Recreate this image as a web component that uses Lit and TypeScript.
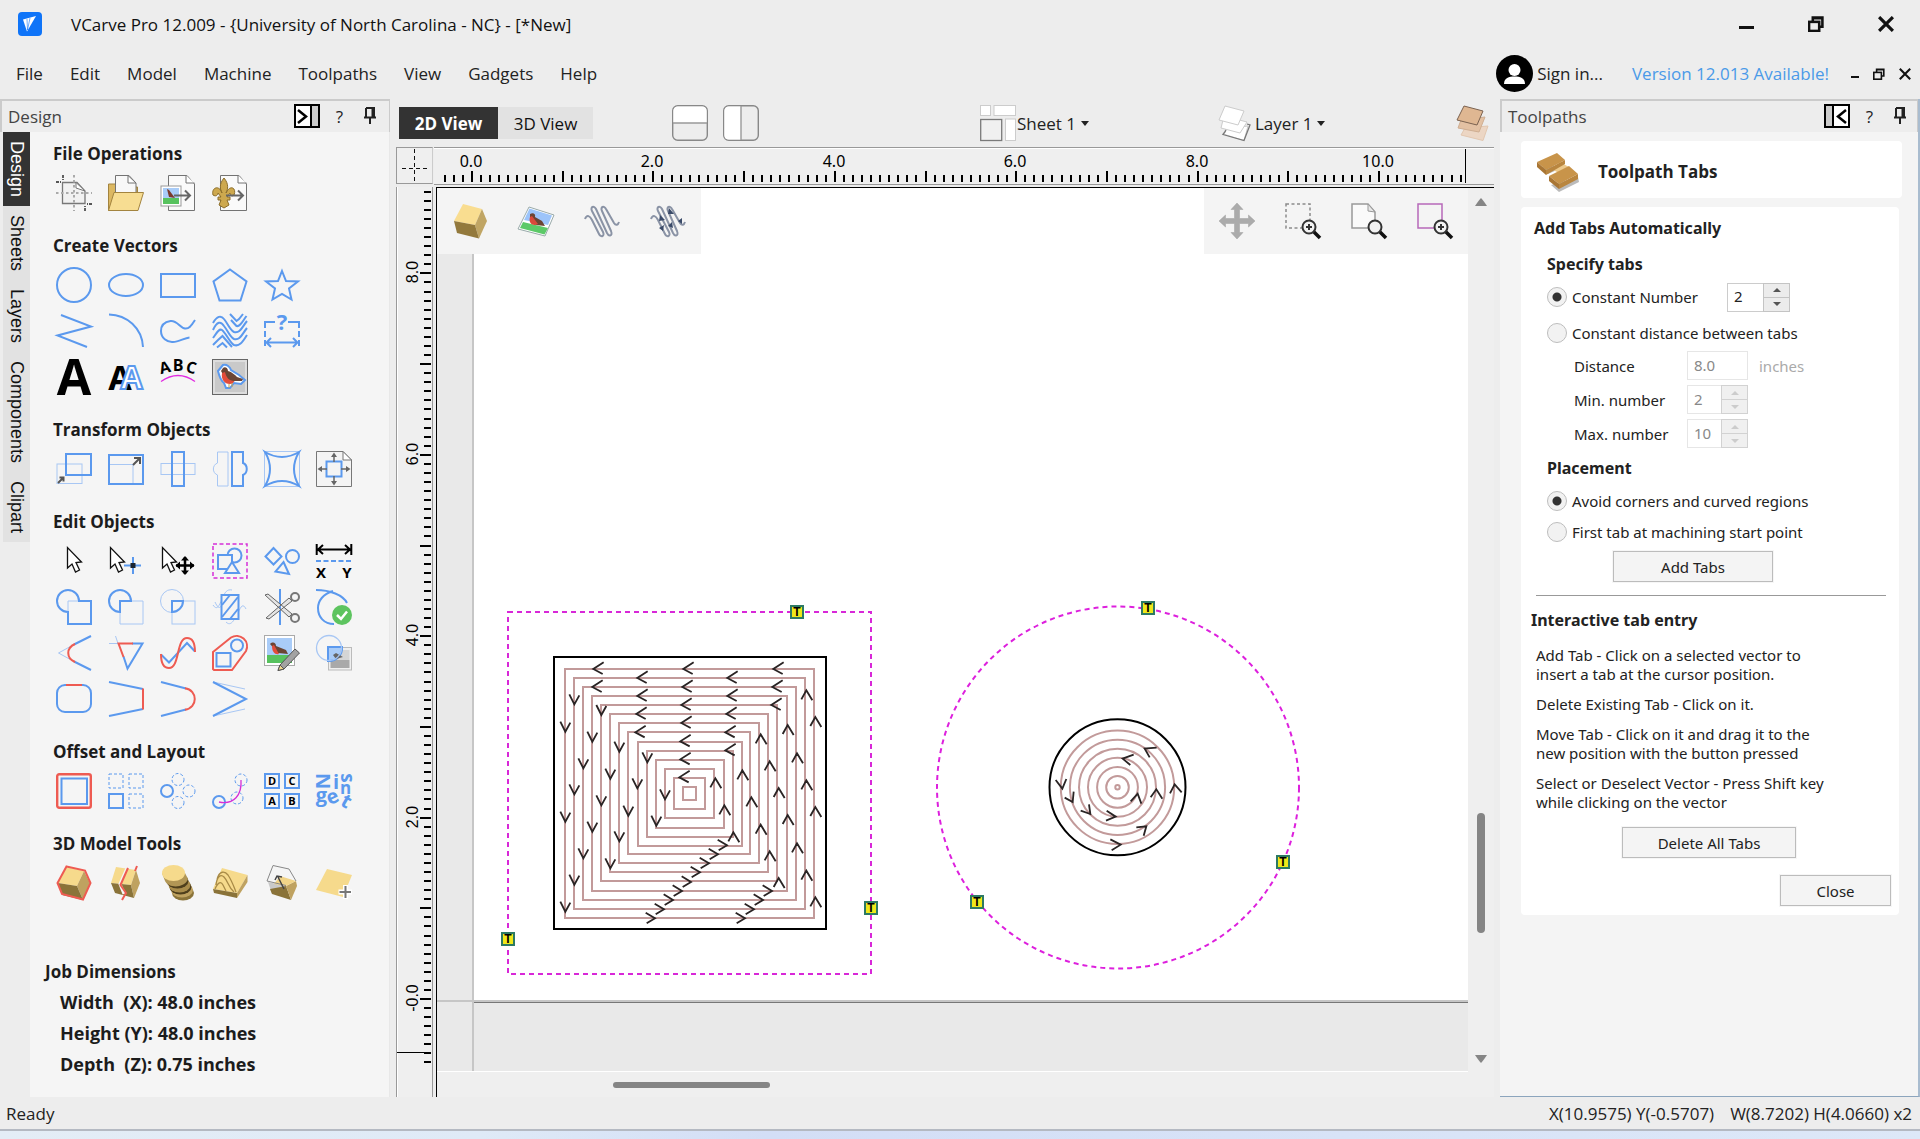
import { LitElement, html, svg, css, nothing, SVGTemplateResult } from "lit";
import { customElement, state } from "lit/decorators.js";
import { classMap } from "lit/directives/class-map.js";

const BLUE = "#5b99ee";
const PALE = "#a8c7f4";
const RED = "#ee5b52";
const PINK = "#d52fd8";
const GREY = "#737373";

type Art = SVGTemplateResult;

const line = (d: string, color = BLUE, w = 2): Art =>
  svg`<path d=${d} fill="none" stroke=${color} stroke-width=${w}></path>`;
const shape = (d: string, fill: string, stroke = "none", w = 1): Art =>
  svg`<path d=${d} fill=${fill} stroke=${stroke} stroke-width=${w}></path>`;
const ring = (cx: number, cy: number, r: number, color = BLUE, w = 2, dash = ""): Art =>
  svg`<circle cx=${cx} cy=${cy} r=${r} fill="none" stroke=${color} stroke-width=${w} stroke-dasharray=${dash}></circle>`;
const box = (x: number, y: number, w: number, h: number, color = BLUE, sw = 2, fill = "none", dash = ""): Art =>
  svg`<rect x=${x} y=${y} width=${w} height=${h} fill=${fill} stroke=${color} stroke-width=${sw} stroke-dasharray=${dash}></rect>`;
const glyph = (t: string, x: number, y: number, size: number, color = "#000", turn = 0, weight = 700): Art =>
  svg`<text x=${x} y=${y} font-family="Open Sans, sans-serif" font-weight=${weight} font-size=${size} fill=${color} text-anchor="middle" transform=${`rotate(${turn} ${x} ${y})`}>${t}</text>`;

const bird: Art = svg`
  <path d="M9 12 L11 9 C13 7 16 9 16 12 C20 13 23 16 25 18 L31 20 L30 22 L23 22 C20 24 15 23 13 19 Z" fill="#6b4534"></path>
  <path d="M10 14 C9 20 12 25 18 25 C20 25 22 24 22 22 C17 22 14 18 13 13 Z" fill="#e24c3a"></path>
  <path d="M17 25 V29 M20 24 V28" stroke="#c9a24a" stroke-width="1"></path>`;

const cursor = (x: number): Art =>
  shape(`M${x} 4.5 V25 L${x + 4.5} 21 L${x + 8} 29 L${x + 12} 27 L${x + 8.5} 19.5 L${x + 14} 19 Z`, "#fff", "#111", 1.3);

const cube: Art = svg`
  ${shape("M10 2 L28 6 L21 21 L2 18 Z", "#f6da8c")}
  ${shape("M28 6 L34 18 L27 35 L21 21 Z", "#bfa260")}
  ${shape("M2 18 L21 21 L27 35 L6 30 Z", "#8a7339")}`;

const squiggle: Art = line(
  "M1 16 C3 11 6 13 8 17 L15 31 C17 35 21 33 19 29 L8 8 C6 4 10 2 12 6 L23 30 C25 34 29 33 27 28 L18 8 C16 4 20 2 22 6 L30 20 C32 23 34 22 35 19",
  "#8a93a5", 2);

const lens = (plus: boolean): Art => svg`
  <path d="M28 28 L35 35" stroke="#111" stroke-width="3.5"></path>
  <circle cx="24" cy="24" r="6.5" fill="#f2f2f2" stroke="#333" stroke-width="2"></circle>
  ${plus ? svg`<path d="M21 24 H27 M24 21 V27" stroke="#333" stroke-width="2"></path>` : nothing}`;

const plies = (fill: string, edge: string, back: string, backEdge: string): Art => svg`
  ${shape("M8 24 L30 21 L26 35.5 L5 29 Z", back, backEdge)}
  ${shape("M6 11 L29 17 L22 28 L3 23 Z", back, backEdge)}
  ${shape("M7 1 L26 6 L20 20 L1 15 Z", fill, edge)}`;

const art: Record<string, Art> = {
  newFile: svg`
    ${shape("M6.5 7.5 H21 L29 16 V28.5 H6.5 Z", "#f1f1f1", "#777", 1.3)}
    ${shape("M20 7.5 V13 L29 16 Z", "#fff", "#777")}
    <path d="M18 0 V36 M0 18 H36" stroke="#aaa" stroke-width="2" stroke-dasharray="2.5 2.5"></path>
    <path d="M7 0 V5 M0 7 H5 M29 36 V31 M36 29 H31" stroke="#222" stroke-width="1.4" stroke-dasharray="3 1"></path>`,
  openFile: svg`
    ${shape("M.5 9 H8 L10 12 H29.500 V35.5 H.5 Z", "#dcb862", "#a3843f")}
    ${shape("M7.5 .5 H21 L28 8 V22 H7.5 Z", "#f8f8f8", GREY)}
    ${shape("M20 .5 V8 H28 Z", "#fff", GREY)}
    ${shape("M6 17.5 H35.5 L30 35.5 H.5 Z", "#f7dd92", "#a3843f")}`,
  importImage: svg`
    ${shape("M8.5 .5 H27 L34.5 9 V35.5 H8.5 Z", "#fafafa", GREY)}
    ${shape("M26 .5 V8 H34.5", "#fff", GREY)}
    <rect x="1" y="11" width="20" height="20" fill="#fff" stroke="#999"></rect>
    <rect x="3" y="13" width="16" height="10" fill="#a9ccf8"></rect>
    <rect x="3" y="23" width="16" height="6" fill="#57c25e"></rect>
    <path d="M7 14 L9 15 L15 23 L9 22 Z" fill="#7b3a2c"></path>
    <path d="M14 20.5 H30 M25 15.5 L30 20.5 L25 25.5" fill="none" stroke="#666" stroke-width="2"></path>`,
  importClip: svg`
    ${shape("M8.5 .5 H27 L34.5 9 V35.5 H8.5 Z", "#fafafa", GREY)}
    ${shape("M26 .5 V8 H34.5", "#fff", GREY)}
    ${shape("M12 3 C17 9 16 14 14 18 C18 9 25 13 22 20 C20 22 18 20 18 18 L15 22 H18 V25 H15 L17 30 L12 33 L7 30 L9 25 H6 V22 H9 L6 18 C6 20 4 22 1 20 C-1 13 7 9 10 18 C8 14 7 9 12 3 Z", "#cda84e", "#8b6d2a")}
    <path d="M14 20.5 H31 M26 15.5 L31 20.5 L26 25.5" fill="none" stroke="#666" stroke-width="2"></path>`,
  circle: ring(18, 18, 17),
  ellipse: svg`<ellipse cx="18" cy="18" rx="17" ry="11" fill="none" stroke=${BLUE} stroke-width="2"></ellipse>`,
  rect: box(1, 7, 34, 23),
  polygon: line("M18 2.5 L34.5 14.5 L28.5 33.5 H7.5 L1.5 14.5 Z"),
  star: line("M18 4 L22 14 L34 14.5 L25 21.5 L27.5 32.5 L18 27 L8.5 32.5 L11 21.5 L2 14.5 L14 14 Z"),
  polyline: line("M5 2 L35 13.5 L1.5 22.5 L31 34"),
  arc: line("M1 1.5 C19 2 34 15 35 34"),
  bezier: line("M35 7 C31 13 29 16 25 15.5 C20 15 17 7 10.5 8 C4 9 1 13 1 18 C1 25 7 29.5 13 29 C19 29 24 25 29.5 24.5"),
  texture: svg`
    ${line("M1 10 C5 3 9 2 12 6 C16 11 18 17 22 19 C28 21 30 14 35 8")}
    ${line("M1 17 C5 8 9 8 12 13 C16 18 18 24 22 26 C28 28 30 21 35 15")}
    ${line("M1 25 C4 21 7 15 10 17 C14 20 18 30 22 32 C28 34 31 28 35 22")}
    ${line("M18 1 L24.5 8 L27 6 L31 1 M19 7 L24.5 13 C28 14 30 9 34.5 3")}
    ${line("M1 32 L6 27 L10.5 23 L20 34 M5 34.5 L10.5 30 L15 34.5")}`,
  dimension: svg`
    ${line("M0 9 H11 M24 9 H36")}
    <path d="M1 9 V34 M35 9 V34" stroke=${BLUE} stroke-width="2" stroke-dasharray="6 3"></path>
    ${line("M2 29.5 H34 M7 25 L2.5 29.5 L7 34 M29 25 L33.5 29.5 L29 34")}
    ${glyph("?", 18, 17, 22, BLUE)}`,
  text: glyph("A", 18, 36, 50),
  textOutline: svg`
    ${glyph("A", 12, 30.5, 34)}
    <text x="23.500" y="30" font-family="Open Sans, sans-serif" font-weight="700" font-size="32" fill="#fff" stroke=${BLUE} stroke-width="2" text-anchor="middle">A</text>`,
  textCurve: svg`
    ${glyph("A", 6, 14, 16, "#000", -14)}${glyph("B", 18, 12, 16)}${glyph("C", 30, 14, 16, "#000", 14)}
    ${line("M1 22.500 Q18 10.500 35 22.500", "#e22be2", 1.3)}`,
  trace: svg`
    <rect x=".5" y=".5" width="35" height="35" fill="#ddd" stroke="#666"></rect>
    <rect x="3" y="3" width="30" height="30" fill="#c9c9c9"></rect>
    ${shape("M6 12 L11 6 C15 5 18 8 19 11 L27 16 L33 21 L29 25 L22 24 L18 29 H14 L12 24 C8 21 7 16 6 12 Z", "#fff", BLUE, 2)}
    ${bird}`,
  move: svg`${box(1, 13, 25, 19.5, PALE, 1)}${box(10, 3, 25, 21)}
    <path d="M2 32 L7 27 M3.500 26.500 H7.500 V30.500" fill="none" stroke="#555" stroke-width="2"></path>`,
  scale: svg`${box(1, 4, 34, 29)}${line("M2 13.500 H25 V32", PALE, 1)}
    <path d="M25 14 L31 8 M26 7 H32 V13" fill="none" stroke="#555" stroke-width="2"></path>`,
  align: svg`${box(1, 12.5, 34, 11, PALE, 1)}${box(12, 1, 12, 34)}`,
  mirror: svg`${line("M16 1 H5.500 V12 C0 14 0 22 5.500 24 V35 H16 Z", PALE, 1)}${line("M20 1 H31 V12 C36 14 36 22 31 24 V35 H20 Z")}`,
  distort: svg`${box(.5, .5, 35, 35, PALE, 1)}${line("M1 1 Q18 11 35 1 Q25 18 35 35 Q18 25 1 35 Q11 18 1 1 Z")}`,
  center: svg`${shape("M.5 .5 H27 L35.500 9 V35.500 H.5 Z", "#f4f4f4", "#777")}${shape("M27 .5 V9 H35.500 Z", "#fff", "#777")}
    ${box(10.5, 10.5, 15, 15)}
    <path d="M18 11 V4 M18 25 V32 M11 18 H4 M25 18 H32" stroke="#666" stroke-width="1.500"></path>
    ${shape("M18 1.500 L21 6 H15 Z M18 34.500 L21 30 H15 Z M1.500 18 L6 15 V21 Z M34.500 18 L30 15 V21 Z", "#666")}`,
  select: cursor(11.5),
  nodeEdit: svg`${cursor(2.5)}${line("M16 22.500 H33 M25 14 V31")}<rect x="22.500" y="20" width="5" height="5" fill="#1b2430"></rect>`,
  moveSelect: svg`${cursor(2.5)}<path d="M16 22.500 H34 M25 14 V31" stroke="#000" stroke-width="2.500"></path>
    ${shape("M25 13 L29 17.500 H21 Z M25 32 L29 27.500 H21 Z M15.500 22.500 L20 18.500 V26.500 Z M34.500 22.500 L30 18.500 V26.500 Z", "#000")}`,
  group: svg`${box(1, 1, 34, 34, PINK, 1.5, "none", "4 2.5")}${ring(22.5, 12.5, 7)}
    ${box(6, 12, 14, 14, BLUE, 2, "#f4f4f4")}${shape("M20 19 L27 30 H13 Z", "#f4f4f4", BLUE, 2)}`,
  ungroup: svg`${line("M9.500 5 L17.500 13.500 L9.500 21.500 L1.500 13.500 Z M19.500 19 L25 31 L11.500 28.500 Z")}${ring(28.5, 13.5, 6.5)}`,
  measure: svg`<path d="M.7 1 V12 M35.300 1 V12 M2 6.500 H34 M7 2 L2 6.500 L7 11 M29 2 L34 6.500 L29 11" fill="none" stroke="#000" stroke-width="2"></path>
    <path d="M0 18 H36" stroke=${BLUE} stroke-width="2" stroke-dasharray="5 2.500"></path>${glyph("X", 5, 35, 15)}${glyph("Y", 31, 35, 15)}`,
  weld: svg`${line("M12 23 V12 H23", PALE, 1)}${line("M23 12 A11 11 0 1 0 12 23 V35 H35 V12 Z")}`,
  subtract: svg`${line("M23 12 H35 V35 H12 V23", PALE, 1)}${line("M23 12 A11 11 0 1 0 12 23 V12 Z")}`,
  intersect: svg`${ring(12, 12, 11.5, PALE, 1)}${box(12, 12, 23, 23, PALE, 1)}${line("M12 12 H23 A11 11 0 0 1 12 23 Z")}`,
  trimHatch: svg`${line("M1 16 C5 22 7 17 10 10 C13 3 15 0 20 1 M14 33 C19 38 22 31 26 24 C29 17 31 14 34 20 M3 13 C8 24 10 16 12 10", PALE, 1)}
    ${box(9.5, 6, 17, 24, BLUE, 2, "#f4f4f4")}${line("M10 16 L18 6 M10 28 L26 8 M18 30 L26 20")}`,
  scissors: svg`${line("M16 0 V36")}
    ${shape("M1 6 L4 5 L28 25 L25 28 Z M2 29 L5 30 L28 12 L25 9 Z", "#e4e4e4", "#666")}
    ${ring(31, 8, 4, "#777", 2)}${ring(31, 29, 4, "#777", 2)}`,
  validate: svg`${line("M0 1 C14 1 27 6 31 14 M17 2 C7 5 2 12 2 19 C2 28 8 35 18 35")}
    <circle cx="26" cy="26" r="10" fill="#5dc45f"></circle><path d="M21 26 L25 30 L31 22.500" fill="none" stroke="#fff" stroke-width="2.500"></path>`,
  fillet: svg`${line("M18 9.500 L2.500 18 L18 26.500", PALE, 1)}${line("M35 1 L18 9.500 M18 26.500 L35 35")}${line("M19 9 C10 13 10 23 19 27", RED)}`,
  extend: svg`${line("M1 8.500 H12 M7.500 1 L10.500 10", PALE, 1)}${line("M24 8.500 H34.500 L19.500 33.500 L15.500 21.500")}${line("M25 8.500 H10.500 L15.500 22", RED)}`,
  smooth: svg`${line("M1 19.500 L9 27.500 L27 8 L35 16.500")}${line("M1 19 C1 28 4 33 9 33 C20 33 16 3 27 3 C34 3 35 10 35 17", RED)}`,
  hull: svg`${line("M1 17 L19 2.500 A10.500 10.500 0 0 1 34 16 L20 35 H2 L1 34 Z", RED)}${ring(25, 10.5, 6)}${box(4.5, 18, 14, 13.5)}`,
  editPicture: svg`
    <rect x=".5" y=".5" width="30" height="30" fill="#fff" stroke="#aaa"></rect>
    <rect x="3" y="3" width="25" height="17" fill="#a9ccf8"></rect><rect x="3" y="20" width="25" height="8" fill="#57c25e"></rect>
    <path d="M6 9 C9 6 12 8 12 11 L22 15 L24 19 L14 18 Z" fill="#6b4534"></path><path d="M8 11 C8 17 11 20 15 19 L10 10 Z" fill="#e24c3a"></path>
    ${shape("M16 30 L31 14 L35.500 18 L20 34 L14 35.500 Z", "#a2a2a2", "#555")}${shape("M16 30 L20 34 L14 35.500 Z", "#f0d890", "#555")}`,
  cropPicture: svg`
    <rect x="12.500" y="12.500" width="23" height="22.500" fill="#efefef" stroke="#bbb"></rect>
    <rect x="14.500" y="15" width="19" height="10" fill="#d5d5d5"></rect><rect x="14.500" y="25" width="19" height="8" fill="#a9a9a9"></rect>
    ${shape("M12 12 H26 A13 13 0 0 1 12 26 Z", "#a9ccf8", BLUE, 2)}
    <path d="M17 20 L20 18 L27 22 L20 24 Z" fill="#666"></path>${ring(13, 13, 12.5, PALE, 1.3)}`,
  roundRect: svg`<rect x="1" y="4" width="34" height="27" rx="8" fill="none" stroke=${BLUE} stroke-width="2"></rect>${line("M10 4 H26", RED)}`,
  joinLine: svg`${line("M1 1 L35 8 M35 28 L1 35")}${line("M35 7.500 V28.500", RED)}`,
  joinArc: svg`${line("M1 1 L26 7.500 M26 28.500 L1 35")}${line("M25 7.300 C38 9 38 27 25 28.700", RED)}`,
  joinMove: svg`${line("M1 1 L33 8 M1 35 L33 28", PALE, 1)}${line("M1 1 L34 18 L1 35")}`,
  offset: svg`<rect x="1.200" y="1.200" width="33.600" height="33.600" rx="2" fill="none" stroke=${RED} stroke-width="2.400"></rect>${box(5.5, 5.5, 25.5, 25.5)}`,
  array: svg`${box(1, 1, 14, 14, BLUE, 1, "none", "3 2")}${box(21, 1, 14, 14, BLUE, 1, "none", "3 2")}${box(21, 21, 14, 14, BLUE, 1, "none", "3 2")}${box(1, 21, 14, 14)}`,
  circularArray: svg`${ring(7, 18, 6)}${ring(18, 6.5, 6, BLUE, 1, "3 2")}${ring(29, 18, 6, BLUE, 1, "3 2")}${ring(18, 29.5, 6, BLUE, 1, "3 2")}`,
  pathArray: svg`${ring(29, 7, 6, BLUE, 1, "3 2")}${ring(25, 25, 6, BLUE, 1, "3 2")}${ring(7, 29, 6)}${line("M7 29 C22 32 30 22 29 7", PINK, 1.3)}`,
  platter: svg`${box(1, 1, 14, 14)}${box(21, 1, 14, 14)}${box(1, 21, 14, 14)}${box(21, 21, 14, 14)}
    ${glyph("D", 8, 12, 11)}${glyph("C", 28, 12, 11)}${glyph("A", 8, 32, 11)}${glyph("B", 28, 32, 11)}`,
  nesting: svg`${glyph("N", 0, 8, 20, BLUE, 90)}${glyph("i", 20, 16, 20, BLUE)}${glyph("s", 25, 5, 19, BLUE, 90)}
    ${glyph("n", 29.5, 21, 17, BLUE)}${glyph("g", 5.5, 29, 20, BLUE)}${glyph("e", 19, 30, 20, BLUE, -25)}${glyph("t", 27, 34, 20, BLUE, 30)}`,
  model: svg`${cube}${line("M10.500 1.500 L29 5.500 L34.500 18 L27 34.500 L6 29 L1.500 18 Z", RED)}`,
  slice: svg`${shape("M8 2 L28 5 L23 20 L3 18 Z", "#f6da8c")}${shape("M28 5 L32 18 L26 33 L23 20 Z", "#bfa260")}
    ${shape("M3 18 L23 20 L26 33 L7 28 Z", "#8a7339")}
    ${line("M19 3 L12 19 L16 29", "#f5f5f5", 3)}
    ${line("M20 3 L12.500 20 L18 28 L14 35 M29 1 L27 6", RED)}`,
  turned: svg`
    <ellipse cx="23" cy="28" rx="11" ry="7.500" fill="#8a7339"></ellipse>
    <ellipse cx="22" cy="25" rx="11" ry="7.500" fill="#bfa260"></ellipse>
    <ellipse cx="20.500" cy="22" rx="11" ry="7.500" fill="#4e3f1c"></ellipse>
    <ellipse cx="19.500" cy="20" rx="11" ry="7.500" fill="#a88c4b"></ellipse>
    <ellipse cx="17.500" cy="16" rx="11" ry="7.500" fill="#4e3f1c"></ellipse>
    <path d="M2 8 L5 16 C9 24 25 23 28 14 L25 8 Z" fill="#b19655"></path>
    <ellipse cx="13.500" cy="8" rx="11.500" ry="8" fill="#f6da8c"></ellipse>`,
  carved: svg`${shape("M10 3 L35.500 10 L25 28 L1 24 Z", "#f6da8c")}${shape("M1 24 L25 28 V33 L2 28 Z", "#8a7339")}${shape("M35.500 10 V17 L25 33 V28 Z", "#bfa260")}
    <path d="M4 20 C5 11 9 9 12 12 C16 16 16 22 22 27 M5 15 C7 5 13 6 16 10 C20 16 22 22 24 27 M3 24 C6 17 9 16 11 20 L14 26" fill="none" stroke="#a88a46" stroke-width="1.300"></path>`,
  zeroPlane: svg`${shape("M4 17 L22 21 L8 29 Z", "#c9c9c9")}${shape("M6 24 L22 21 L27 35 L8 29 Z", "#8a7339")}${shape("M22 21 L32 16 L33 21 L27 35 Z", "#bfa260")}${shape("M10 19 L16 11 L32 16 L22 21 Z", "#f1d488")}
    ${line("M9 .5 L25 4 L32 16 M9 .5 L3 16 L22 20.500", "#888", 1)}<path d="M20 24 L14 12 M11 15 L13 11 L18 12" fill="none" stroke="#444" stroke-width="1.500"></path>`,
  addPlane: svg`${shape("M11 4 L36 10 L27 32 L0 25 Z", "#f6da8c")}<path d="M29.500 20 V34 M22.500 27 H36" stroke="#fff" stroke-width="5"></path><path d="M29.500 21 V33 M23.500 27 H35" stroke="#777" stroke-width="2"></path>`,

  block: svg`${shape("M11 1 L30 6 L23 22 L2 18 Z", "#f9dd90")}${shape("M30 6 L35 18 L27 35.500 L23 22 Z", "#c0a564")}${shape("M2 18 L23 22 L27 35.500 L5 30 Z", "#93793c")}`,
  picture: svg`${shape("M11 4 L36 12 L27 33 L0 26 Z", "#fff", "#9aa")}${shape("M11.500 5.500 L34 12.500 L30 22 L6 17 Z", "#9cc4fa")}${shape("M5 19 L30 25 L26.500 31.500 L2 25 Z", "#5cc968")}
    ${shape("M12 11 C15 9 18 11 17 14 L24 18 L27 23 L18 22 L12 18 Z", "#6b4534")}${shape("M12 14 C10 20 15 24 20 21 L14 13 Z", "#d9483a")}`,
  toolpath: squiggle,
  toolpathArrows: svg`${squiggle}${shape("M10 12 L15 17 L9 18 Z M19 5 L24 11 L18 11 Z M28 18 L32 15 L32 21 Z M9 25 L14 22 L13 28 Z M18 23 L22 19 L23 25 Z", "#3a4a68")}`,
  pan: shape("M18 0 L24 6.500 H20.500 V15.500 H29.500 V12 L36 18 L29.500 24 V20.500 H20.500 V29.500 H24 L18 36 L12 29.500 H15.500 V20.500 H6.500 V24 L0 18 L6.500 12 V15.500 H15.500 V6.500 H12 Z", "#ababab", "#a0a0a0", .5),
  zoomBox: svg`${box(1, 1, 24, 24, "#8a8a8a", 1.5, "none", "3 2.500")}${lens(true)}`,
  zoomPage: svg`${shape("M1 1 H17 L24 9 V25 H1 Z", "#fafafa", "#999", 1.5)}${shape("M17 1 V8 L24 9 Z", "#e8e8e8", "#999")}${lens(false)}`,
  zoomSelection: svg`${box(1, 1, 24, 24, "#b768b9", 1.5)}${lens(true)}`,
  splitH: svg`<rect x=".7" y=".7" width="34.600" height="34.600" rx="5" fill="#ededed" stroke="#888" stroke-width="1.400"></rect><path d="M1.400 18 V6 Q1.400 1.400 6 1.400 H30 Q34.600 1.400 34.600 6 V18 Z" fill="#fff"></path>${line("M1 18 H35", "#999", 1.4)}`,
  splitV: svg`<rect x=".7" y=".7" width="34.600" height="34.600" rx="5" fill="#ededed" stroke="#888" stroke-width="1.400"></rect><path d="M18 1.400 H6 Q1.400 1.400 1.400 6 V30 Q1.400 34.600 6 34.600 H18 Z" fill="#fff"></path>${line("M18 1 V35", "#999", 1.4)}`,
  sheet: svg`${box(.5, .5, 10, 10, "#ccc", 1, "#fff")}${box(14, .5, 21.5, 10, "#ccc", 1, "#fff")}${box(25.5, 14, 10, 21.5, "#ccc", 1, "#fff")}${box(.7, 14.5, 21, 21, "#7a7a7a", 1.3, "#f0f0f0")}`,
  layer: svg`${plies("#fff", "#ccc", "#fff", "#ccc")}${shape("M8 25 L7 27 L5 29.500 L26 35.500 L32 20 L29 19", "none", "#777", 1.3)}`,
  material: svg`${shape("M9 23 L32 21 L27 35.500 L5 30 Z", "#ecd6c4", "#e2c7b0")}${shape("M5 15 L29 12 L23 27 L2 23 Z", "#e3c1a3", "#cfae92")}${shape("M8 1 L27 6 L21 20 L1 15 Z", "#dfb792", "#7b6250")}`,
};

const shared = css`
  * { box-sizing: border-box; }
  button, input { font: inherit; color: inherit; margin: 0; }
  button { background: none; border: 0; padding: 0; display: inline-flex; align-items: center; justify-content: center; }
  h2, h3, p { margin: 0; padding: 0; }
  svg { display: block; }
  .icon { overflow: visible; }
  .dock { display: flex; align-items: center; height: 33px; padding: 0 12px 1px 6px; background: #ededed; border: solid #cbcbcb; border-width: 2px 1px 0 2px; color: #444; font-size: 17px; }
  .dock-title { flex: 1; }
  .dock-actions { display: flex; align-items: center; gap: 16px; color: #222; }
  .help { margin-right: 4px; }
`;

const pin = html`<svg width="14" height="18" viewBox="0 0 14 18"><path d="M3 1 H11 V10 M3 1 V10 M1 10.500 H13 M7 11 V17" fill="none" stroke="#222" stroke-width="2"></path><path d="M9.500 1 V10" stroke="#222" stroke-width="2"></path></svg>`;

const picture = (name: string) => html`<svg class="icon" width="36" height="36" viewBox="0 0 36 36" aria-hidden="true">${art[name]}</svg>`;

const groups: { title: string; rows: string[][] }[] = [
  { title: "File Operations", rows: [["newFile", "openFile", "importImage", "importClip"]] },
  { title: "Create Vectors", rows: [
    ["circle", "ellipse", "rect", "polygon", "star"],
    ["polyline", "arc", "bezier", "texture", "dimension"],
    ["text", "textOutline", "textCurve", "trace"]] },
  { title: "Transform Objects", rows: [["move", "scale", "align", "mirror", "distort", "center"]] },
  { title: "Edit Objects", rows: [
    ["select", "nodeEdit", "moveSelect", "group", "ungroup", "measure"],
    ["weld", "subtract", "intersect", "trimHatch", "scissors", "validate"],
    ["fillet", "extend", "smooth", "hull", "editPicture", "cropPicture"],
    ["roundRect", "joinLine", "joinArc", "joinMove"]] },
  { title: "Offset and Layout", rows: [["offset", "array", "circularArray", "pathArray", "platter", "nesting"]] },
  { title: "3D Model Tools", rows: [["model", "slice", "turned", "carved", "zeroPlane", "addPlane"]] },
];

@customElement("design-panel")
export class DesignPanel extends LitElement {
  static styles = [shared, css`
    :host { display: flex; flex-direction: column; }
    .body { flex: 1; display: flex; }
    .tabs { width: 30px; padding-left: 3px; background: #ededed; }
    .tab-list { display: flex; flex-direction: column; background: #e2e2e2; }
    .tab { writing-mode: vertical-rl; width: 27px; padding: 9px 0; font: 18px "Liberation Sans", Arial, sans-serif; line-height: 27px; color: #111; }
    .tab.active { background: #333; color: #fff; }
    .content { flex: 1; padding: 10px 0 0 23px; background: #f5f5f5; border-right: 1px solid #e8e8e8; }
    .group { margin-bottom: 23px; }
    .group-title { font-size: 17px; font-weight: 700; line-height: 24px; color: #1c1c1c; }
    .rows { display: flex; flex-direction: column; gap: 10px; padding: 9px 0 0 3px; }
    .row { display: flex; gap: 16px; }
    .tool { width: 36px; height: 36px; }
    .job { margin: 55px 0 0 -8px; font-weight: 700; line-height: 31px; color: #1c1c1c; }
    .job-title { font-size: 17px; }
    .job-line { padding-left: 15px; font-size: 18px; white-space: pre; }
  `];
  @state() private tab = "Design";
  render() {
    return html`
      <header class="dock">
        <span class="dock-title">Design</span>
        <span class="dock-actions">
          <button aria-label="Collapse"><svg width="26" height="24" viewBox="0 0 26 24"><rect x="1" y="1" width="24" height="22" fill="#fff" stroke="#000" stroke-width="2"></rect><rect x="17" y="1" width="8" height="22" fill="#ccc" stroke="#000" stroke-width="2"></rect><path d="M4 6 L12 12.500 L4 19" fill="none" stroke="#000" stroke-width="2.500"></path></svg></button>
          <button class="help" aria-label="Help">?</button>
          <button aria-label="Pin">${pin}</button>
        </span>
      </header>
      <div class="body">
        <nav class="tabs"><div class="tab-list">
          ${["Design", "Sheets", "Layers", "Components", "Clipart"].map(t => html`
            <button class=${classMap({ tab: true, active: t === this.tab })} @click=${() => (this.tab = t)}>${t}</button>`)}
        </div></nav>
        <div class="content">
          ${groups.map(g => html`
            <section class="group">
              <h2 class="group-title">${g.title}</h2>
              <div class="rows">${g.rows.map(r => html`
                <div class="row">${r.map(n => html`<button class="tool" aria-label=${n}>${picture(n)}</button>`)}</div>`)}
              </div>
            </section>`)}
          <section class="job">
            <h2 class="job-title">Job Dimensions</h2>
            <p class="job-line">Width  (X): 48.0 inches</p>
            <p class="job-line">Height (Y): 48.0 inches</p>
            <p class="job-line">Depth  (Z): 0.75 inches</p>
          </section>
        </div>
      </div>`;
  }
}

/* Ruler scale: pixels for one tenth of an inch. */
const TENTH = 9.07;

/* Direction arrows, three units to the pixel: [tip x, tip y] lists. */
const leftTips = [[310, 237], [580, 237], [850, 237], [442, 264], [712, 264], [307, 291], [577, 291], [847, 291], [442, 318], [712, 318], [574, 345], [844, 345], [439, 372], [709, 372], [574, 399], [436, 427], [706, 427], [571, 454], [706, 481], [571, 508], [568, 562]];
const downTips = [[226, 425], [226, 695], [226, 965], [253, 343], [253, 613], [253, 884], [280, 535], [280, 805], [307, 455], [307, 725], [334, 375], [334, 646], [361, 566], [361, 835], [388, 485], [388, 754], [415, 677], [442, 595], [472, 517], [499, 707], [525, 628]];
const upTips = [[976, 381], [976, 651], [976, 922], [949, 301], [949, 571], [949, 842], [921, 490], [921, 760], [893, 405], [893, 675], [866, 594], [866, 864], [839, 514], [839, 784], [812, 433], [812, 704], [784, 622], [757, 541], [730, 727], [703, 646], [676, 565]];
const rightTips = [[495, 985], [522, 958], [549, 930], [576, 903], [603, 876], [630, 847], [657, 820], [684, 793], [711, 766], [765, 985], [792, 958], [819, 930], [846, 903]];
const heads = (tips: number[][], a: number[], b: number[]) =>
  tips.map(([x, y]) => `M${x + a[0]} ${y + a[1]} L${x} ${y} L${x + b[0]} ${y + b[1]}`).join(" ");
const squareArrows = [
  heads(leftTips, [31, -20], [28, 15]),
  heads(downTips, [-15, -30], [15, -27]),
  heads(upTips, [-15, 27], [18, 30]),
  heads(rightTips, [-28, -17], [-25, 15]),
].join(" ");
const circleArrows = "M710 473 L674 476 L689 502 M641 494 L608 506 L631 525 M750 610 L764 583 L785 607 M692 622 L709 598 L727 626 M632 634 L653 611 L664 641 M407 570 L427 596 L439 567 M434 623 L458 636 L461 605 M482 662 L511 672 L507 643 M560 662 L587 680 L558 692 M649 712 L679 709 L671 737 M571 748 L602 764 L575 781";
const tabMarks = [[797, 612], [508, 939], [871, 908], [1148, 608], [1283, 862], [977, 902]];

@customElement("drawing-view")
export class DrawingView extends LitElement {
  static styles = [shared, css`
    :host { display: flex; flex-direction: column; padding: 0 6px; min-width: 0; }
    .viewbar { display: grid; grid-template-columns: 584px 1fr 1fr 38px; align-items: center; height: 48px; font-size: 17px; color: #222; }
    .views { display: flex; align-items: center; padding-left: 3px; }
    .view { height: 32px; width: 95px; background: #e2e2e2; color: #111; }
    .view.active { width: 99px; background: #333; color: #fff; font-weight: 700; }
    .splits { display: flex; gap: 15px; margin-left: 79px; }
    .drop { justify-content: flex-start; gap: 1px; }
    .caret { margin-left: 4px; }
    .board { flex: 1; display: grid; grid-template: 38px 1fr / 37px 1fr; gap: 2px 1px; min-height: 0; }
    .corner { border: 1px solid #999; border-right-color: #ccc; margin-bottom: 1px; background: #efefef; }
    .ruler-h { border: solid #999; border-width: 1px 0; background: #efefef; box-shadow: inset 0 1px #fff; overflow: hidden; }
    .ruler-v { border: solid #999; border-width: 0 1px; background: #efefef; overflow: hidden; box-shadow: inset 1px 0 #fff; }
    .ruler-h svg, .ruler-v svg { width: 100%; height: 100%; }
    .stage { margin-left: 2px; border: solid #000; border-width: 1px 0 0 1px; display: grid; grid-template: 1fr 25px / 1fr 26px; min-height: 0; background: #efefef; }
    .paper { position: relative; min-height: 0; overflow: hidden; background: #e9e9e9; border-bottom: 1px solid #fff; }
    .drawing { position: absolute; inset: 0; width: 100%; height: 100%; }
    .palette { position: absolute; top: 0; display: flex; background: #f4f4f4; }
    .palette.left { left: 0; }
    .palette.right { right: 0; }
    .palette button { width: 66px; height: 66px; }
    .scroll-v { display: flex; flex-direction: column; align-items: center; padding: 10px 0 9px; }
    .scroll-v .before { flex: 603; }
    .scroll-v .after { flex: 121; }
    .thumb-v { width: 8px; flex: 119; border-radius: 4px; background: #858585; }
    .scroll-h { display: flex; align-items: center; }
    .scroll-h .before { flex: 176; }
    .thumb-h { height: 6px; flex: 157; border-radius: 3px; background: #858585; }
    .scroll-h .after { flex: 698; }
    .num { font: 16px "Noto Sans", sans-serif; }
    .num-v { font: 16px "Liberation Sans", Arial, sans-serif; }
  `];
  @state() private view = "2D View";

  private rulerH() {
    const ticks = [];
    for (let i = -3; i <= 109; i++) {
      const x = Math.round(37 + i * TENTH);
      ticks.push(svg`<rect x=${x} y=${i % 10 ? 27 : 23} width="2" height=${i % 10 ? 7 : 11}></rect>`);
    }
    const labels = [0, 2, 4, 6, 8, 10].map(n =>
      svg`<text class="num" x=${Math.round(37 + n * TENTH * 10)} y="19" text-anchor="middle">${n}.0</text>`);
    return html`<svg>${svg`${ticks}${labels}<rect x="1031" y="1" width="1" height="34"></rect>`}</svg>`;
  }

  private rulerV() {
    const ticks = [];
    for (let i = -7; i <= 89; i++) {
      const y = Math.round(811 - i * TENTH);
      ticks.push(svg`<rect x=${i % 10 ? 27 : 23} y=${y} width=${i % 10 ? 7 : 11} height="2"></rect>`);
    }
    const labels = [[0, "-0.0"], [2, "2.0"], [4, "4.0"], [6, "6.0"], [8, "8.0"]].map(([n, t]) => {
      const y = Math.round(811 - (n as number) * TENTH * 10);
      return svg`<text class="num-v" x="21" y=${y} transform=${`rotate(-90 21 ${y})`} text-anchor="middle">${t}</text>`;
    });
    return html`<svg>${svg`${ticks}${labels}<rect x="0" y="865" width="28" height="1"></rect>`}</svg>`;
  }

  private drawing() {
    const loops = Array.from({ length: 14 }, (_, i) => {
      const half = 124.5 - i * TENTH;
      return box(Math.round(689.5 - half), Math.round(793.5 - half), Math.round(half * 2), Math.round(half * 2), "#c29a9a", 2);
    });
    const rings = [56.7, 47.6, 38.5, 29.5, 20.4, 11.3, 2.2].map(r => ring(1117.5, 787.3, r, "#c29a9a", 2));
    return svg`
      <rect x="36" y="0" width="100%" height="813" fill="#fff"></rect>
      <rect x="35" y="0" width="2" height="100%" fill="#c6c6c6"></rect>
      <rect x="0" y="812" width="100%" height="2" fill="#c6c6c6"></rect>
      <rect x="37" y="814" width="100%" height="1" fill="#777"></rect>
      <g transform="translate(-437 -188)">
        ${box(508, 612, 363, 362, "#d828d8", 2, "none", "5 4")}
        ${box(554, 657, 272, 272, "#000", 2)}
        ${loops}
        ${ring(1118, 787.5, 181, "#dd20dd", 2, "5 4")}
        ${ring(1117.5, 787.3, 68, "#000", 2)}
        ${rings}
        <g transform="translate(490 590) scale(.333333)">${line(squareArrows, "#2a2424", 5.5)}</g>
        <g transform="translate(920 590) scale(.333333)">${line(circleArrows, "#2a2424", 5.5)}</g>
        ${tabMarks.map(([x, y]) => svg`${box(x - 6, y - 6, 12, 12, "#2d7a63", 2, "#efe81a")}<text x=${x} y=${y + 4} font-family="Liberation Sans, sans-serif" font-weight="700" font-size="12" text-anchor="middle">T</text>`)}
      </g>`;
  }

  render() {
    const tools = (names: string[]) => names.map(n => html`<button aria-label=${n}>${picture(n)}</button>`);
    const caret = html`<svg class="caret" width="8" height="5" viewBox="0 0 8 5"><path d="M0 0 H8 L4 5 Z" fill="#222"></path></svg>`;
    return html`
      <div class="viewbar">
        <div class="views">
          ${["2D View", "3D View"].map(v => html`<button class=${classMap({ view: true, active: v === this.view })} @click=${() => (this.view = v)}>${v}</button>`)}
          <div class="splits">${tools(["splitH", "splitV"])}</div>
        </div>
        <button class="drop">${picture("sheet")}Sheet 1${caret}</button>
        <button class="drop">${picture("layer")}Layer 1${caret}</button>
        <button class="drop" aria-label="Material">${picture("material")}</button>
      </div>
      <div class="board">
        <div class="corner"><svg width="35" height="35"><path d="M17.500 1 V34 M5 20.500 H31" stroke="#111" stroke-dasharray="4 3"></path></svg></div>
        <div class="ruler-h">${this.rulerH()}</div>
        <div class="ruler-v">${this.rulerV()}</div>
        <div class="stage">
          <div class="paper">
            <svg class="drawing">${this.drawing()}</svg>
            <div class="palette left">${tools(["block", "picture", "toolpath", "toolpathArrows"])}</div>
            <div class="palette right">${tools(["pan", "zoomBox", "zoomPage", "zoomSelection"])}</div>
          </div>
          <div class="scroll-v">
            <svg width="12" height="8"><path d="M6 0 Q8 2 12 8 H0 Q4 2 6 0 Z" fill="#858585"></path></svg>
            <span class="before"></span><span class="thumb-v"></span><span class="after"></span>
            <svg width="12" height="8"><path d="M6 8 Q8 6 12 0 H0 Q4 6 6 8 Z" fill="#858585"></path></svg>
          </div>
          <div class="scroll-h"><span class="before"></span><span class="thumb-h"></span><span class="after"></span></div>
        </div>
      </div>`;
  }
}

@customElement("toolpath-panel")
export class ToolpathPanel extends LitElement {
  static styles = [shared, css`
    :host { display: flex; flex-direction: column; background: #f4f4f4; border-right: 2px solid #a9bccf; border-bottom: 1px solid #8ca5bd; color: #222; }
    .dock { padding-right: 10px; }
    .cards { display: flex; flex-direction: column; gap: 9px; padding: 9px 16px 0 21px; }
    .card { background: #fff; border-radius: 4px; }
    .banner { display: flex; align-items: center; gap: 19px; height: 57px; padding: 4px 0 0 16px; font-size: 17px; font-weight: 700; }
    .form { padding: 9px 8px 9px 13px; margin-right: 3px; font: 15px "Noto Sans", sans-serif; display: flex; flex-direction: column; }
    .major { font-size: 16px; line-height: 24px; font-weight: 700; }
    .minor { font-size: 16px; line-height: 24px; font-weight: 700; margin: 12px 0 6px 13px; }
    .minor.second { margin-top: 8px; }
    .option { display: flex; align-items: center; height: 30px; margin-left: 13px; gap: 5px; }
    .option + .option { margin-top: 6px; }
    .option + .option.tight { margin-top: 1px; }
    .radio { appearance: none; width: 20px; height: 20px; border: 1px solid #bdbdbd; border-radius: 50%; background: #f2f2f2; }
    .radio:checked { background: radial-gradient(circle, #333 0 4px, #f2f2f2 5px); }
    .spin { display: flex; height: 29px; }
    .spin.lead { margin-left: 24px; }
    .field { width: 36px; border: 1px solid #ccc; background: #fff; padding: 0 0 2px 6px; outline: 0; border-radius: 0; }
    .spin .field { border-right: 0; }
    .arrows { display: flex; flex-direction: column; width: 27px; border: 1px solid #c4c4c4; background: #ececec; }
    .arrow { flex: 1; }
    .arrow + .arrow { border-top: 1px solid #c4c4c4; }
    .detail { display: grid; grid-template-columns: 113px 61px 1fr; align-items: center; margin: 3px 0 0 40px; row-gap: 5px; }
    .detail .field { width: 34px; border-color: #e6e6e6; color: #888; }
    .detail .wide { width: 61px; height: 29px; }
    .detail .unit { padding-left: 11px; color: #aaa; }
    .detail .arrows { opacity: .75; }
    .push { height: 31px; background: #f4f4f4; border: 1px solid #bcbcbc; box-shadow: 0 0 0 1px #f6f6f6; }
    .add { width: 160px; margin: 4px 0 0 79px; }
    .rule { height: 1px; width: 350px; margin: 13px 0 12px 2px; background: #999; border: 0; }
    .entry { margin-left: -3px; }
    .notes { display: flex; flex-direction: column; gap: 11px; padding: 14px 0 0 2px; line-height: 19px; white-space: nowrap; }
    .clear { width: 174px; margin: 15px 0 0 88px; }
    .close { width: 111px; margin-top: 17px; align-self: flex-end; }
  `];

  private arrows(color: string) {
    return html`<span class="arrows">
      <button class="arrow" type="button" aria-label="Increase"><svg width="8" height="4"><path d="M4 0 L8 4 H0 Z" fill=${color}></path></svg></button>
      <button class="arrow" type="button" aria-label="Decrease"><svg width="8" height="4"><path d="M4 4 L8 0 H0 Z" fill=${color}></path></svg></button>
    </span>`;
  }

  render() {
    return html`
      <header class="dock">
        <span class="dock-title">Toolpaths</span>
        <span class="dock-actions">
          <button aria-label="Collapse"><svg width="26" height="24" viewBox="0 0 26 24"><rect x="1" y="1" width="24" height="22" fill="#fff" stroke="#000" stroke-width="2"></rect><rect x="1" y="1" width="8" height="22" fill="#ccc" stroke="#000" stroke-width="2"></rect><path d="M22 6 L14 12.500 L22 19" fill="none" stroke="#000" stroke-width="2.500"></path></svg></button>
          <button class="help" aria-label="Help">?</button>
          <button aria-label="Pin">${pin}</button>
        </span>
      </header>
      <div class="cards">
        <div class="card banner">
          <svg width="42" height="40" viewBox="0 0 42 40">
            <path d="M14 33 L22 40 L42 30 L41 25 Z M3 15 L11 22 L20 18 V14 Z" fill="#bbb"></path>
            <path d="M14 17 L23 10 L32 15 L24 22 Z" fill="#ecc98c"></path>
            <path d="M0 10 L20 1 L28 8 L9 18 Z" fill="#c8944a"></path><path d="M0 10 L9 18 V23 L0 15 Z" fill="#a97634"></path><path d="M9 18 L28 8 V12 L9 23 Z" fill="#b9863f"></path>
            <path d="M12 24 L32 14 L41 22 L22 32 Z" fill="#c8944a"></path><path d="M12 24 L22 32 V37 L12 29 Z" fill="#a97634"></path><path d="M22 32 L41 22 V27 L22 37 Z" fill="#b9863f"></path>
          </svg>
          Toolpath Tabs
        </div>
        <form class="card form" @submit=${(e: Event) => e.preventDefault()}>
          <h2 class="major">Add Tabs Automatically</h2>
          <h3 class="minor">Specify tabs</h3>
          <div class="option">
            <input class="radio" type="radio" name="mode" id="number" checked><label for="number">Constant Number</label>
            <span class="spin lead"><input class="field" value="2" aria-label="Number of tabs">${this.arrows("#555")}</span>
          </div>
          <div class="option"><input class="radio" type="radio" name="mode" id="distance"><label for="distance">Constant distance between tabs</label></div>
          <div class="detail">
            <label for="gap">Distance</label><input class="field wide" id="gap" value="8.0" disabled><span class="unit">inches</span>
            <label for="min">Min. number</label><span class="spin"><input class="field" id="min" value="2" disabled>${this.arrows("#bbb")}</span><span></span>
            <label for="max">Max. number</label><span class="spin"><input class="field" id="max" value="10" disabled>${this.arrows("#bbb")}</span><span></span>
          </div>
          <h3 class="minor second">Placement</h3>
          <div class="option"><input class="radio" type="radio" name="place" id="avoid" checked><label for="avoid">Avoid corners and curved regions</label></div>
          <div class="option tight"><input class="radio" type="radio" name="place" id="first"><label for="first">First tab at machining start point</label></div>
          <button class="push add" type="button">Add Tabs</button>
          <hr class="rule">
          <h2 class="major entry">Interactive tab entry</h2>
          <div class="notes">
            <p>Add Tab - Click on a selected vector to<br>insert a tab at the cursor position.</p>
            <p>Delete Existing Tab - Click on it.</p>
            <p>Move Tab - Click on it and drag it to the<br>new position with the button pressed</p>
            <p>Select or Deselect Vector - Press Shift key<br>while clicking on the vector</p>
          </div>
          <button class="push clear" type="button">Delete All Tabs</button>
          <button class="push close" type="button">Close</button>
        </form>
      </div>`;
  }
}

@customElement("app-root")
export class AppRoot extends LitElement {
  static styles = [shared, css`
    :host { display: flex; flex-direction: column; min-height: 100vh; background: #ededed; color: #222; font: 16px "Open Sans", "Noto Sans", sans-serif; }
    .titlebar { display: flex; align-items: center; height: 50px; padding: 0 26px 2px 18px; color: #111; }
    .title { flex: 1; padding-left: 29px; font-size: 17px; }
    .window { display: flex; align-items: center; gap: 54px; }
    .menubar { display: flex; align-items: center; height: 49px; padding: 0 9px 2px 16px; font-size: 17px; }
    .menus { flex: 1; display: flex; gap: 27px; }
    .signin { gap: 4px; margin-right: 29px; }
    .update { color: #4a9ae8; text-decoration: none; margin-right: 22px; }
    .child { display: flex; align-items: center; gap: 14px; }
    .main { flex: 1; display: grid; grid-template-columns: 390px 1fr 420px; }
    .status { display: flex; justify-content: space-between; height: 32px; padding: 0 8px 0 6px; line-height: 34px; font-size: 17px; white-space: pre; }
    .coords { display: flex; gap: 16px; }
    .desktop { height: 10px; border-top: 2px solid #b4b9c2; background: linear-gradient(90deg, #e4edf6, #dfeaf7 25%, #d3def6 40%, #dde8f8); }
  `];
  render() {
    const restore = (s: number, w: number) => html`<svg width=${s} height=${s} viewBox="0 0 15 15"><path d="M4.500 5 V1.500 H13.500 V10 H11 M4 2 H14" fill="none" stroke="#111" stroke-width=${w}></path><rect x="1" y="5.500" width="9.500" height="8.500" fill="none" stroke="#111" stroke-width=${w}></rect></svg>`;
    const cross = (s: number, w: number) => html`<svg width=${s} height=${s} viewBox="0 0 15 15"><path d="M1 1 L14 14 M14 1 L1 14" stroke="#111" stroke-width=${w}></path></svg>`;
    const dash = (w: number, h: number) => html`<svg width=${w} height="14"><rect y="9" width=${w} height=${h} fill="#111"></rect></svg>`;
    return html`
      <header class="titlebar">
        <svg width="24" height="24" viewBox="0 0 24 24"><rect width="24" height="24" rx="4" fill="#0f74f8"></rect><path d="M5 7.500 L18 4 L9 19.500 Z" fill="#fff"></path><path d="M9 7 L9.500 18 M12 6 L9.500 18" stroke="#0f74f8" stroke-width=".6"></path></svg>
        <span class="title">VCarve Pro 12.009 - {University of North Carolina - NC} - [*New]</span>
        <span class="window"><button aria-label="Minimize">${dash(15, 3)}</button><button aria-label="Restore">${restore(16, 2.4)}</button><button aria-label="Close">${cross(16, 3)}</button></span>
      </header>
      <nav class="menubar">
        <span class="menus">${["File", "Edit", "Model", "Machine", "Toolpaths", "View", "Gadgets", "Help"].map(m => html`<button>${m}</button>`)}</span>
        <button class="signin"><svg width="37" height="37" viewBox="0 0 37 37"><circle cx="18.500" cy="18.500" r="18.500"></circle><circle cx="18.500" cy="15" r="6" fill="#fff"></circle><path d="M8 29 C8 23 13 21.500 18.500 21.500 C24 21.500 29 23 29 29 Z" fill="#fff"></path></svg>Sign in...</button>
        <a class="update" href="#update">Version 12.013 Available!</a>
        <span class="child"><button aria-label="Minimize drawing">${dash(8, 2)}</button><button aria-label="Restore drawing">${restore(12, 2)}</button><button aria-label="Close drawing">${cross(12, 2.6)}</button></span>
      </nav>
      <main class="main">
        <design-panel></design-panel>
        <drawing-view></drawing-view>
        <toolpath-panel></toolpath-panel>
      </main>
      <footer class="status"><span>Ready</span><span class="coords"><span>X(10.9575) Y(-0.5707)</span><span>W(8.7202) H(4.0660) x2</span></span></footer>
      <div class="desktop"></div>`;
  }
}
